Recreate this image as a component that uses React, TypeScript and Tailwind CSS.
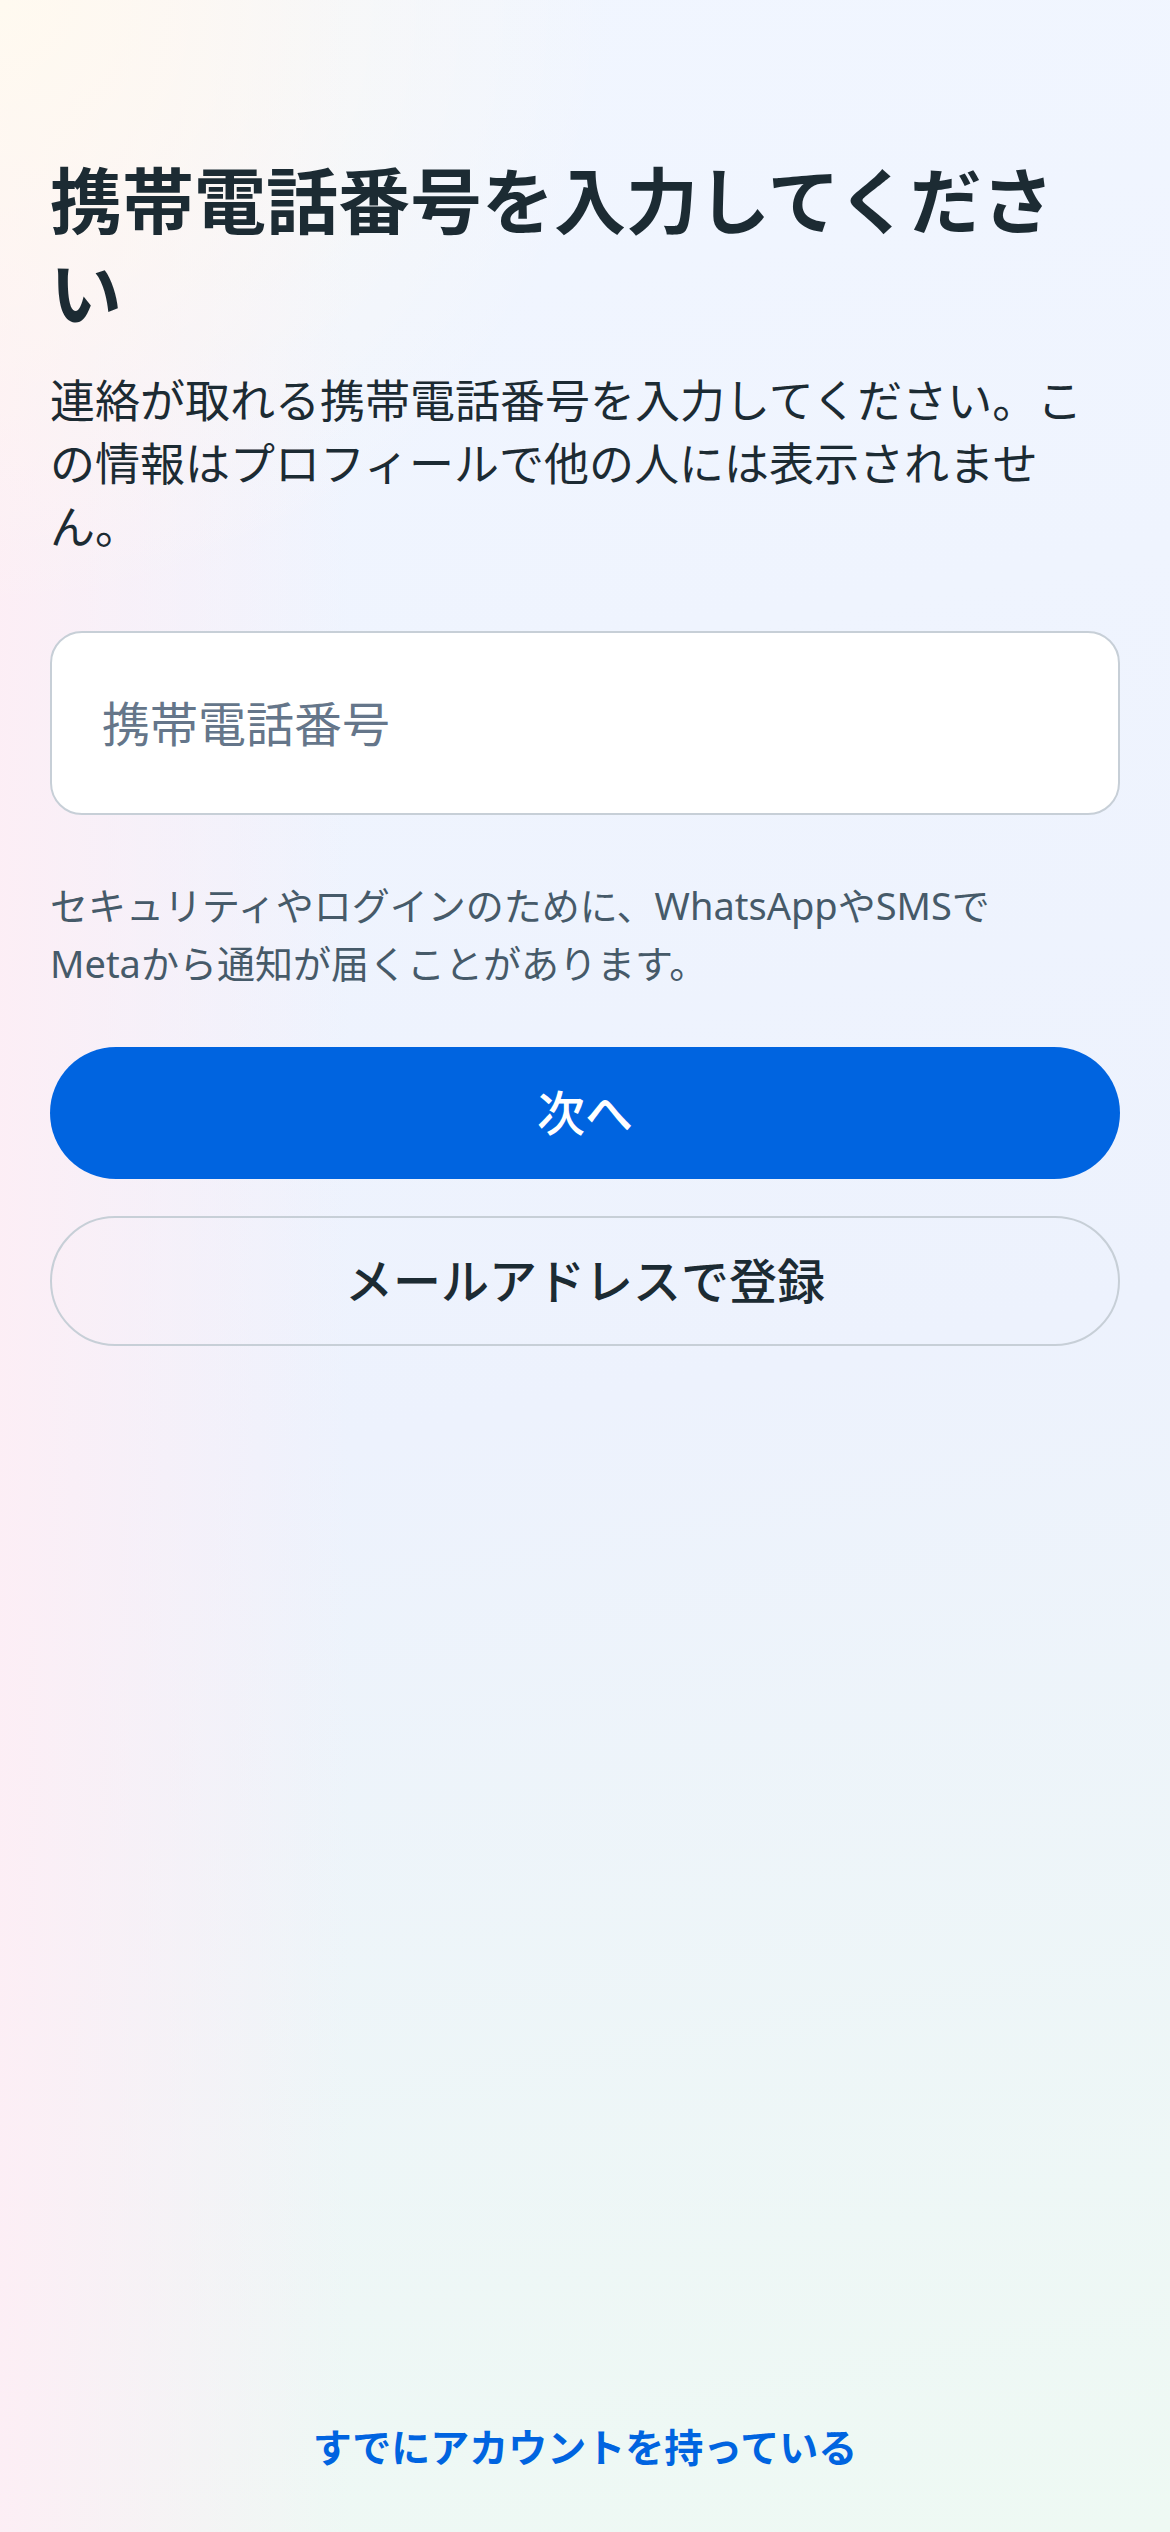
import React, { useState } from 'react';

export default function App() {
  const [phone, setPhone] = useState<string>('');

  return (
    <main className="min-h-screen w-full flex flex-col px-[50px] pt-[154px] pb-[57px] font-['Noto_Sans','Noto_Sans_CJK_JP',sans-serif] text-[#1c2b33] bg-[radial-gradient(circle_at_0%_0%,#fffaf0_0%,rgba(255,250,240,0)_22%),linear-gradient(to_right,rgba(253,238,245,0.95)_0%,rgba(253,238,245,0)_30%),linear-gradient(170deg,#f1f6ff_0%,#edf2fd_55%,#eef9f3_100%)]">
      <h1 className="text-[72px] leading-[92px] font-bold">携帯電話番号を入力してください</h1>
      <p className="mt-[31px] text-[45px] leading-[63px]">
        連絡が取れる携帯電話番号を入力してください。この情報はプロフィールで他の人には表示されません。
      </p>

      <input
        type="tel"
        value={phone}
        onChange={(e) => setPhone(e.target.value)}
        placeholder="携帯電話番号"
        className="mt-[73px] h-[184px] w-full rounded-[32px] border-2 border-[#c7cfd7] bg-white pl-[50px] pr-[40px] text-[48px] text-[#1c2b33] outline-none placeholder:text-[#65768a]"
      />

      <p className="mt-[61px] pr-[80px] text-[38px] leading-[58px] text-[#465a69]">
        セキュリティやログインのために、WhatsAppやSMSでMetaから通知が届くことがあります。
      </p>

      <button
        type="button"
        className="mt-[55px] h-[132px] w-full rounded-full bg-[#0064e0] text-[48px] font-medium text-white"
      >
        次へ
      </button>
      <button
        type="button"
        className="mt-[37px] h-[130px] w-full rounded-full border-2 border-[#c7cfd7] bg-transparent text-[48px] font-medium text-[#1c2b33]"
      >
        メールアドレスで登録
      </button>

      <div className="mt-auto flex justify-center">
        <button type="button" className="text-[39px] leading-[56px] font-bold text-[#0064e0]">
          すでにアカウントを持っている
        </button>
      </div>
    </main>
  );
}
